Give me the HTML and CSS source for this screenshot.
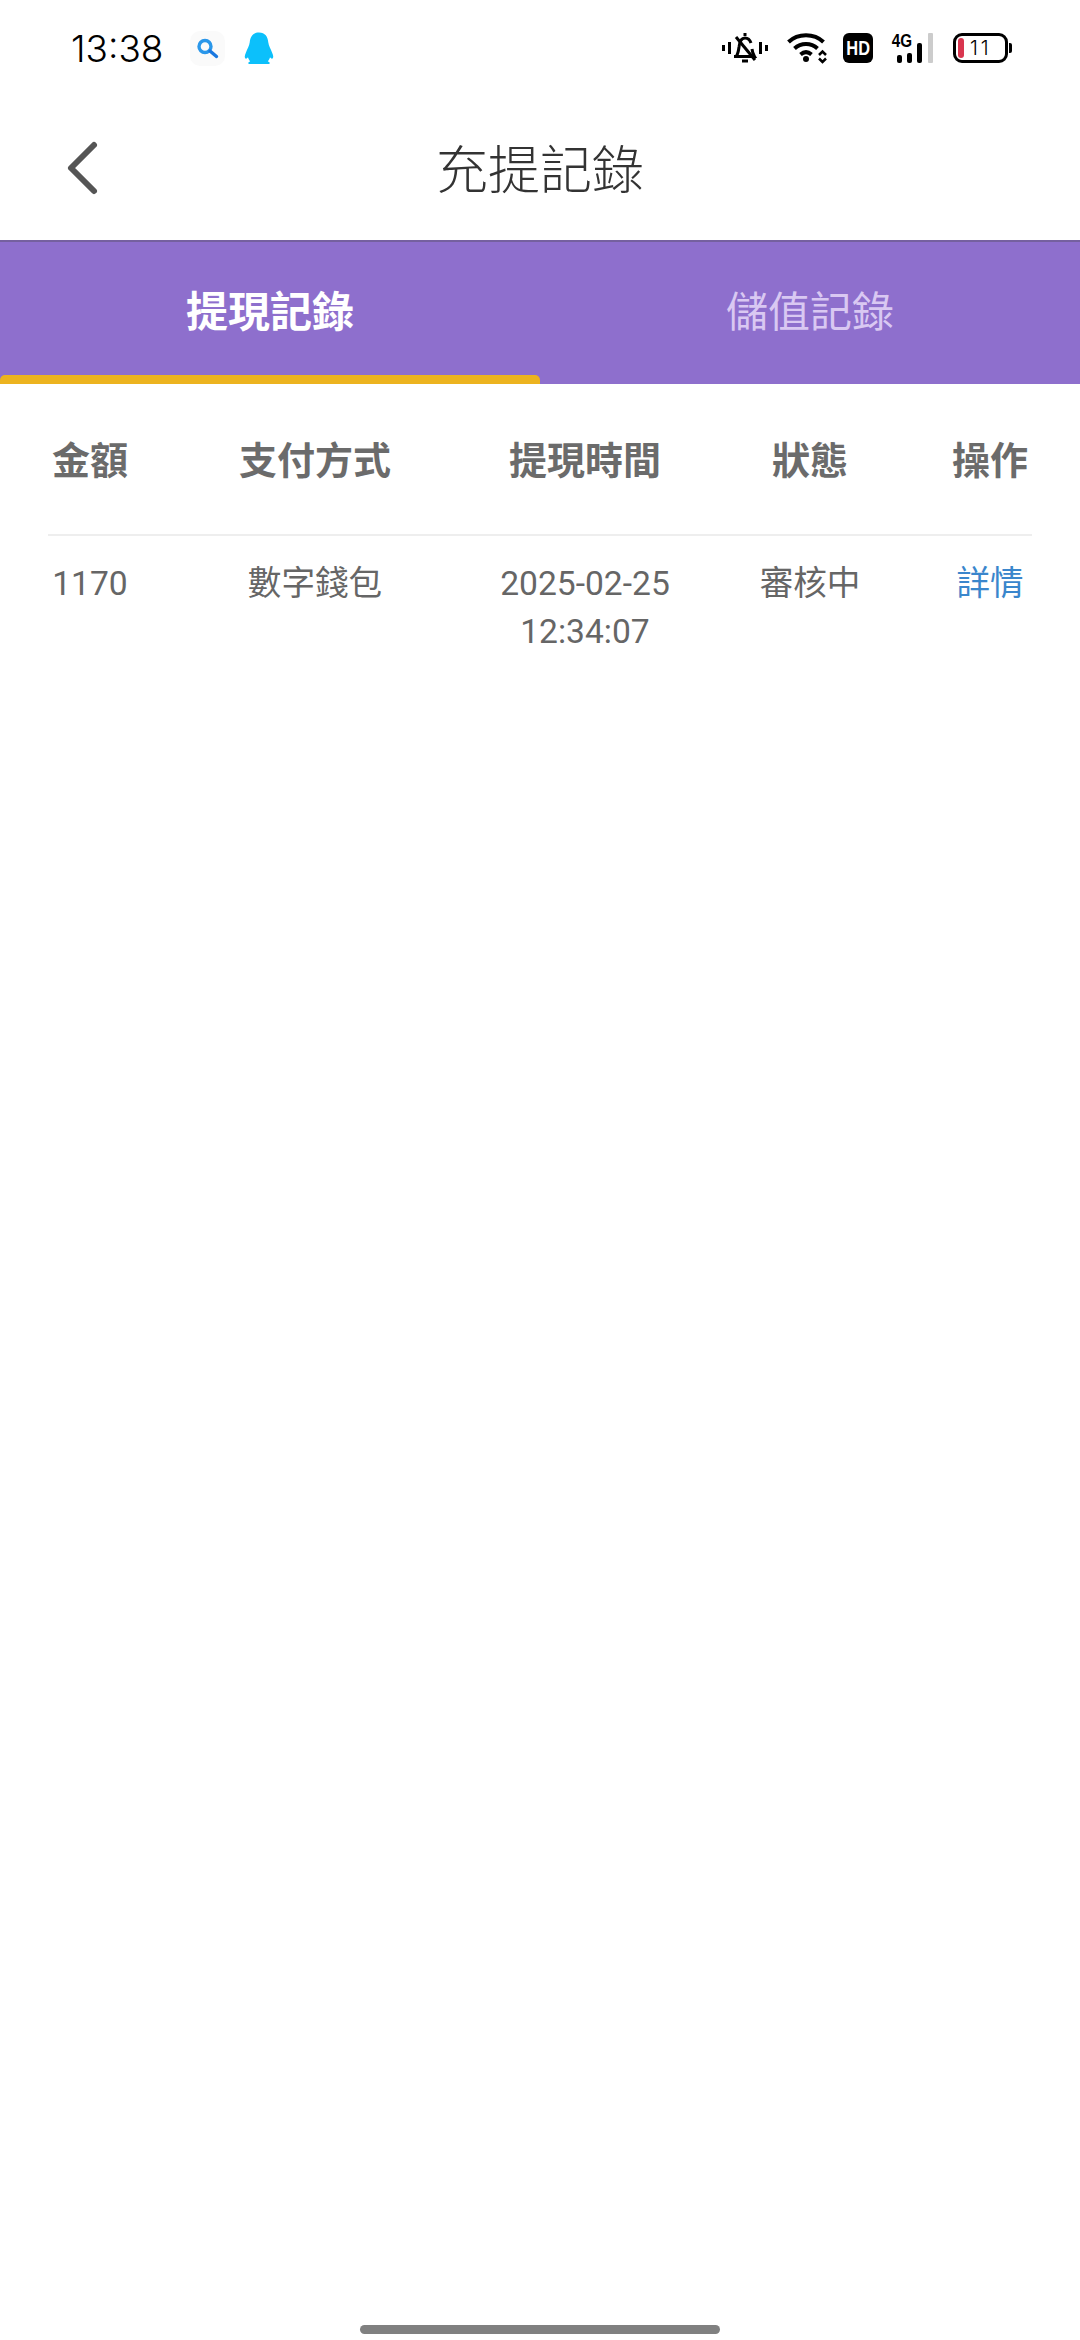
FILE: index.html
```html
<!DOCTYPE html>
<html lang="zh-Hant">
<head>
  <meta charset="UTF-8">
  <meta name="viewport" content="width=device-width, initial-scale=1.0">
  <title>充提記錄</title>
  <link rel="stylesheet" href="styles.css">
</head>
<body>
  <div class="page">
    <!-- Status bar -->
    <div class="status-bar">
      <div class="status-left">
        <span class="clock">13:38</span>
        <span class="app-search">
          <svg width="24" height="24" viewBox="0 0 24 24">
            <circle cx="9" cy="10.500" r="6" fill="none" stroke="#2a97ea" stroke-width="3.400"/>
            <path d="M14 15 L20.500 20.500" stroke="#1a78e0" stroke-width="3.400" stroke-linecap="round"/>
          </svg>
        </span>
        <svg class="app-qq" width="30" height="33" viewBox="0 0 34 36">
          <path fill="#0cc0fb" d="M17 0 C24 0 27 5 27.500 11 C28 15 30 18 32 23 C33.500 26 33.500 29 32 29.500 C31 29.800 30 28.500 29.500 28 C29 30 28 31.500 27 32.500 L29 34 C29.500 35 29 35.500 28 35.500 L6 35.500 C5 35.500 4.500 35 5 34 L7 32.500 C6 31.500 5 30 4.500 28 C4 28.500 3 29.800 2 29.500 C0.500 29 0.500 26 2 23 C4 18 6 15 6.500 11 C7 5 10 0 17 0 Z"/>
        </svg>
      </div>
      <div class="status-right">
        <!-- muted bell -->
        <svg width="46" height="32" viewBox="0 0 46 32" fill="none" stroke="#000" stroke-width="3">
          <path d="M1.500 13v6M7.500 10v12M38.500 10v12M44.500 13v6"/>
          <path d="M23 1v3"/>
          <path d="M14 25c2-3 2.500-6 3-10 .5-5 2.500-9 6-9 3 0 5 2 6 5M30 17c.3 3 1 5 2.500 7.500H12"/>
          <path d="M14 5l19 23"/>
          <path d="M20 29h6"/>
        </svg>
        <!-- wifi -->
        <svg class="wifi" width="42" height="32" viewBox="0 0 42 32" fill="none" stroke="#000" stroke-width="4">
          <path d="M1.500 10C11 1 27 1 36.500 10"/>
          <path d="M7.500 16.500C14 10.500 24 10.500 30.500 16.500"/>
          <path d="M13.500 22.500C17 19.500 21 19.500 24.500 22.500"/>
          <circle cx="19" cy="27" r="3" fill="#000" stroke="none"/>
          <path d="M32 23l3.500-3.500 3.500 3.500M32 26.500l3.500 3.500 3.500-3.500" stroke-width="2.500"/>
        </svg>
        <span class="hd"><span class="hd-text">HD</span></span>
        <!-- signal -->
        <span class="signal">
          <span class="net">4G</span>
          <span class="bars">
            <i class="bar bar-1"></i>
            <i class="bar bar-2"></i>
            <i class="bar bar-3"></i>
          </span>
          <i class="bar bar-off"></i>
        </span>
        <!-- battery -->
        <span class="battery">
          <span class="battery-body">
            <i class="battery-level"></i>
            <span class="battery-num">11</span>
          </span>
          <i class="battery-tip"></i>
        </span>
      </div>
    </div>

    <!-- Title bar -->
    <div class="title-bar">
      <svg class="back" width="40" height="60" viewBox="0 0 40 60" fill="none">
        <path d="M32 7 L9 30 L32 53" stroke="#555" stroke-width="6" stroke-linecap="round" stroke-linejoin="round"/>
      </svg>
      <h1 class="page-title">充提記錄</h1>
    </div>

    <!-- Tabs -->
    <div class="tabs">
      <div class="tab tab-active">提現記錄</div>
      <div class="tab">儲值記錄</div>
    </div>

    <!-- Records -->
    <div class="content">
      <table class="records">
        <colgroup>
          <col class="col-amount">
          <col class="col-method">
          <col class="col-time">
          <col class="col-state">
          <col class="col-action">
        </colgroup>
        <thead>
          <tr>
            <th>金額</th>
            <th>支付方式</th>
            <th>提現時間</th>
            <th>狀態</th>
            <th>操作</th>
          </tr>
        </thead>
        <tbody>
          <tr>
            <td>1170</td>
            <td>數字錢包</td>
            <td>2025-02-25<br>12:34:07</td>
            <td>審核中</td>
            <td><a class="detail">詳情</a></td>
          </tr>
        </tbody>
      </table>
    </div>

    <div class="home-bar"><div class="home-pill"></div></div>
  </div>
</body>
</html>
```

FILE: styles.css
```css
* {
  box-sizing: border-box;
}
body {
  margin: 0;
  background-color: #fff;
  font-family: Roboto, "Noto Sans CJK TC", sans-serif;
  color: #666;
}
.page {
  width: 1080px;
  height: 2340px;
  display: flex;
  flex-direction: column;
}

/* status bar */
.status-bar {
  height: 96px;
  padding: 0 68px 0 71px;
  display: flex;
  align-items: center;
  justify-content: space-between;
}
.status-left {
  display: flex;
  align-items: center;
}
.clock {
  font-family: Inter, sans-serif;
  font-weight: 300;
  font-size: 37px;
  color: #000;
  width: 119px;
}
.app-search {
  width: 35px;
  height: 35px;
  border-radius: 10px;
  background-color: #fafafa;
  display: flex;
  align-items: center;
  justify-content: center;
}
.app-qq {
  margin-left: 19px;
}
.status-right {
  display: flex;
  align-items: center;
}
.wifi {
  margin-left: 19px;
}
.hd {
  margin-left: 14px;
  width: 30px;
  height: 30px;
  border-radius: 6px;
  background-color: #000;
  color: #fff;
  font-family: "Liberation Sans", sans-serif;
  font-weight: 700;
  font-size: 21px;
  display: flex;
  align-items: center;
  justify-content: center;
}
.hd-text {
  display: block;
  transform: scaleX(0.78);
}
.signal {
  position: relative;
  margin-left: 18px;
  width: 44px;
  height: 30px;
  display: flex;
  align-items: flex-end;
}
.net {
  position: absolute;
  left: -2px;
  top: -3px;
  width: 26px;
  text-align: center;
  font-family: "Liberation Sans", sans-serif;
  font-weight: 700;
  font-size: 19px;
  color: #000;
  transform: scaleX(0.8);
}
.bars {
  display: flex;
  align-items: flex-end;
  gap: 5px;
  margin-left: 6px;
  margin-right: 6px;
}
.bar {
  display: block;
  width: 5px;
  background-color: #000;
  border-radius: 2px;
}
.bar-1 { height: 8px; }
.bar-2 { height: 10px; }
.bar-3 { height: 20px; }
.bar-off {
  height: 30px;
  border-radius: 1px;
  background-color: #ccc;
}
.battery {
  margin-left: 18px;
  display: flex;
  align-items: center;
}
.battery-body {
  width: 55px;
  height: 30px;
  border: 3px solid #000;
  border-radius: 9px;
  display: flex;
  align-items: center;
  padding-left: 2px;
}
.battery-level {
  width: 6px;
  height: 20px;
  border-radius: 3px;
  background-color: #d9364f;
}
.battery-num {
  margin-left: 6px;
  font-family: Inter, sans-serif;
  font-weight: 300;
  font-size: 20px;
  letter-spacing: 3px;
  color: #000;
}
.battery-tip {
  width: 3px;
  height: 10px;
  margin-left: 1px;
  border-radius: 0 2px 2px 0;
  background-color: #000;
}

/* title bar */
.title-bar {
  height: 144px;
  padding-left: 62px;
  display: flex;
  align-items: center;
  position: relative;
}
.page-title {
  position: absolute;
  left: 0;
  right: 0;
  margin: -3px 0 0;
  text-align: center;
  font-size: 52px;
  font-weight: 300;
  color: #333;
}

/* tabs */
.tabs {
  height: 144px;
  display: flex;
  background-color: #8e6fcd;
  border-top: 2px solid #75609f;
}
.tab {
  flex: 1;
  display: flex;
  align-items: center;
  justify-content: center;
  padding-bottom: 9px;
  font-size: 42px;
  color: #d9c8f2;
}
.tab-active {
  position: relative;
  color: #fff;
  font-weight: 700;
}
.tab-active::after {
  content: "";
  position: absolute;
  left: 0;
  right: 0;
  bottom: 0;
  height: 9px;
  border-radius: 5px 5px 0 0;
  background-color: #ecb31f;
}

/* table */
.content {
  flex: 1;
  padding: 0 48px;
}
.records {
  width: 984px;
  table-layout: fixed;
  border-collapse: collapse;
}
.col-amount { width: 84px; }
.col-method { width: 366px; }
.col-time { width: 174px; }
.col-state { width: 276px; }
.col-action { width: 84px; }
.records th {
  height: 151px;
  padding: 0 0 3px;
  font-size: 38px;
  font-weight: 700;
  color: #6b6b6b;
  border-bottom: 2px solid #eee;
  white-space: nowrap;
}
.records td {
  padding: 24px 0 0;
  font-size: 33.6px;
  line-height: 48px;
  text-align: center;
  vertical-align: top;
  white-space: nowrap;
}
.detail {
  color: #3a86cc;
}

/* home indicator */
.home-bar {
  height: 44px;
  display: flex;
  justify-content: center;
}
.home-pill {
  width: 360px;
  height: 9px;
  margin-top: 29px;
  border-radius: 5px;
  background-color: #808080;
}
```
